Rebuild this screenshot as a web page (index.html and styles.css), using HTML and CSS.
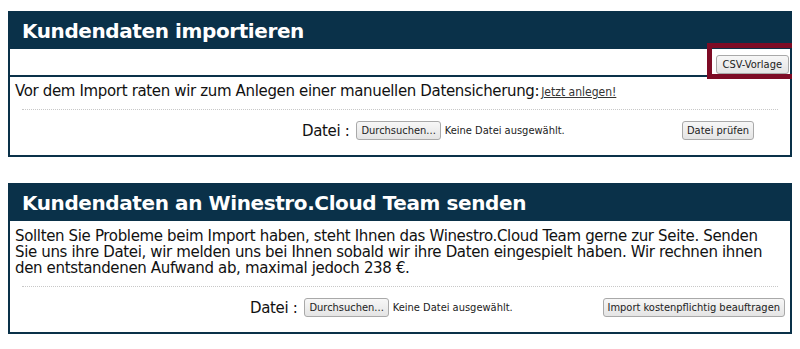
FILE: index.html
```html
<!DOCTYPE html>
<html lang="de">

<head>
    <meta charset="UTF-8">
    <meta name="viewport" content="width=device-width, initial-scale=1.0">
    <title>Kundendaten importieren</title>
    <link rel="stylesheet" href="styles.css">
</head>

<body>
    <div class="panel">
        <div class="panel-head">Kundendaten importieren</div>

        <div class="toolbar">
            <button class="btn btn-csv">CSV-Vorlage</button>
        </div>
        <!-- Markierung um den Vorlage-Button -->
        <div class="mark"></div>

        <div class="panel-body first">
            <p class="hint">Vor dem Import raten wir zum Anlegen einer manuellen Datensicherung:<a href="#" class="link">Jetzt anlegen!</a></p>
            <hr class="sep">
            <div class="file-row row-check">
                <span class="label">Datei :</span>
                <button class="btn">Durchsuchen...</button>
                <span class="nofile">Keine Datei ausgewählt.</span>
                <button class="btn action">Datei prüfen</button>
            </div>
        </div>
    </div>

    <div class="panel last">
        <div class="panel-head">Kundendaten an Winestro.Cloud Team senden</div>

        <div class="panel-body second">
            <p class="hint">Sollten Sie Probleme beim Import haben, steht Ihnen das Winestro.Cloud Team gerne zur Seite. Senden Sie uns ihre Datei, wir melden uns bei Ihnen sobald wir ihre Daten eingespielt haben. Wir rechnen ihnen den entstandenen Aufwand ab, maximal jedoch 238 €.</p>
            <hr class="sep">
            <div class="file-row row-send">
                <span class="label">Datei :</span>
                <button class="btn">Durchsuchen...</button>
                <span class="nofile">Keine Datei ausgewählt.</span>
                <button class="btn action">Import kostenpflichtig beauftragen</button>
            </div>
        </div>
    </div>
</body>

</html>
```
FILE: styles.css
```css
* {
    box-sizing: border-box;
}

body {
    margin: 8px;
    background-color: #fff;
    color: #111;
    font: 15px "DejaVu Sans", Verdana, sans-serif;
    letter-spacing: -0.35px;
}

.panel {
    position: relative;
    border: 2px solid #0a3149;
    margin-top: 3px;
    margin-bottom: 26px;
}

.panel.last {
    margin-bottom: 0;
}

.panel-head {
    height: 36px;
    line-height: 36px;
    padding-left: 12px;
    background-color: #0a3149;
    color: #fff;
    font-weight: bold;
    font-size: 20px;
    letter-spacing: -0.4px;
}

.toolbar {
    height: 28px;
    padding: 5px 1px 0 0;
    border-bottom: 2px solid #0a3149;
    text-align: right;
}

.mark {
    position: absolute;
    top: 30px;
    right: -7px;
    width: 90px;
    height: 36px;
    border: 5px solid #7d0b25;
}

.panel-body {
    padding: 0 5px 15px 5px;
}

.panel-body.first {
    padding-top: 6px;
}

.panel-body.second {
    padding-top: 7px;
}

.second .hint {
    padding-right: 16px;
}

.hint {
    margin: 0;
    line-height: 16px;
}

.link {
    margin-left: 2px;
    color: #333;
    font: 12px "DejaVu Sans Condensed", Tahoma, sans-serif;
    letter-spacing: 0;
    text-decoration: underline;
}

.sep {
    margin: 10px 7px 11px 7px;
    border: 0;
    border-top: 1px dotted #c8c8c8;
    height: 0;
}

.file-row {
    display: flex;
    align-items: center;
}

.row-check {
    padding-left: 287px;
}

.row-check .action {
    margin-right: 31px;
}

.row-send {
    padding-left: 235px;
}

.row-send .action {
    margin-right: 0;
}

.label {
    margin-right: 7px;
}

.nofile {
    margin-left: 4px;
    color: #222;
    font: 11px "DejaVu Sans Condensed", Tahoma, sans-serif;
    letter-spacing: 0;
}

.btn {
    height: 19px;
    padding: 0 4px;
    border: 1px solid #a9a9a9;
    border-radius: 3px;
    background: linear-gradient(#f7f7f7, #e4e4e4);
    color: #222;
    font: 11px "DejaVu Sans Condensed", Tahoma, sans-serif;
    letter-spacing: 0;
    line-height: 17px;
}

.btn-csv {
    padding: 0 6px;
}

.action {
    margin-left: auto;
}
```
